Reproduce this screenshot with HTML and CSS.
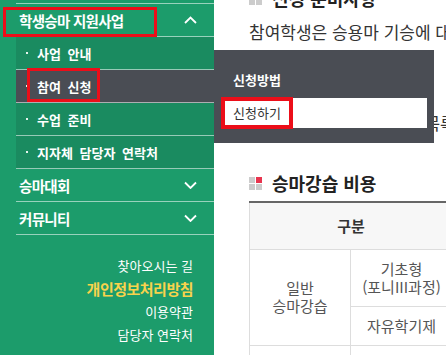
FILE: index.html
```html
<!DOCTYPE html>
<html lang="ko">
<head>
    <meta charset="UTF-8">
    <title>학생승마 지원사업 - 참여 신청</title>
    <link rel="stylesheet" href="styles.css">
</head>
<body>
<div class="wrap">
    <aside class="side">
        <ul class="gnb">
            <li class="menu open">
                <a class="menu-tit" href="#">학생승마 지원사업
                    <svg class="arr" width="13" height="8" viewBox="0 0 13 8"><polyline points="1,7 6.5,1.5 12,7" fill="none" stroke="#fff" stroke-width="1.8"/></svg>
                </a>
                <span class="mark mark-tit"></span>
                <ul class="sub">
                    <li><a href="#">사업 안내</a></li>
                    <li class="on">
                        <a href="#">참여 신청</a>
                        <span class="mark mark-sub"></span>
                        <div class="pop">
                            <strong>신청방법</strong>
                            <div class="pop-box">
                                <a href="#">신청하기</a>
                                <span class="mark mark-pop"></span>
                            </div>
                        </div>
                    </li>
                    <li><a href="#">수업 준비</a></li>
                    <li><a href="#">지자체 담당자 연락처</a></li>
                </ul>
            </li>
            <li class="menu">
                <a class="menu-tit" href="#">승마대회
                    <svg class="arr" width="13" height="8" viewBox="0 0 13 8"><polyline points="1,1.5 6.5,7 12,1.5" fill="none" stroke="#fff" stroke-width="1.8"/></svg>
                </a>
            </li>
            <li class="menu">
                <a class="menu-tit" href="#">커뮤니티
                    <svg class="arr" width="13" height="8" viewBox="0 0 13 8"><polyline points="1,1.5 6.5,7 12,1.5" fill="none" stroke="#fff" stroke-width="1.8"/></svg>
                </a>
            </li>
        </ul>
        <div class="side-links">
            <a href="#">찾아오시는 길</a>
            <a href="#" class="privacy">개인정보처리방침</a>
            <a href="#">이용약관</a>
            <a href="#">담당자 연락처</a>
        </div>
    </aside>

    <main class="content">
        <h3 class="tit tit-cut"><i class="ico"><b></b><b class="red"></b><b></b><b></b></i>신청 준비사항</h3>
        <p class="txt">참여학생은 승용마 기승에 대한 기본 교육을 이수해야 합니다.</p>
        <p class="txt txt2">참여 학생 명단은 신청서 목록에서 확인할 수 있습니다.</p>

        <h3 class="tit tit2"><i class="ico"><b></b><b class="red"></b><b></b><b></b></i>승마강습 비용</h3>
        <table class="tbl">
            <colgroup>
                <col style="width: 101px">
                <col style="width: 102px">
                <col style="width: 200px">
            </colgroup>
            <thead>
            <tr>
                <th colspan="2">구분</th>
                <th>비용</th>
            </tr>
            </thead>
            <tbody>
            <tr>
                <td rowspan="2">일반<br>승마강습</td>
                <td>기초형<br>(포니III과정)</td>
                <td>무료</td>
            </tr>
            <tr>
                <td>자유학기제</td>
                <td>무료</td>
            </tr>
            <tr>
                <td>&nbsp;</td>
                <td>&nbsp;</td>
                <td>&nbsp;</td>
            </tr>
            </tbody>
        </table>
    </main>
</div>
</body>
</html>
```

FILE: styles.css
```css
* {
    margin: 0;
    padding: 0;
    box-sizing: border-box;
}

html, body {
    width: 446px;
    height: 355px;
    overflow: hidden;
    background: #fff;
}

body {
    font-family: "Noto Sans CJK KR", "Noto Sans", sans-serif;
    color: #333;
}

a {
    color: inherit;
    text-decoration: none;
}

ul {
    list-style: none;
}

.wrap {
    display: flex;
    height: 355px;
}

/* 왼쪽 메뉴 */
.side {
    width: 214px;
    flex-shrink: 0;
    background: #1c9c6b;
    color: #fff;
    position: relative;
    z-index: 2;
}

.gnb {
    margin: 3px 0 0 16px;
    border-top: 1px solid rgba(255, 255, 255, .55);
}

.menu {
    position: relative;
}

.menu-tit {
    display: flex;
    justify-content: space-between;
    align-items: center;
    height: 33px;
    padding: 0 17px 0 3px;
    border-bottom: 1px solid rgba(255, 255, 255, .55);
    font-size: 14.5px;
    font-weight: bold;
    letter-spacing: -0.7px;
}

.sub {
    background: #1a8b60;
}

.sub > li {
    position: relative;
}

.sub > li > a {
    display: flex;
    align-items: center;
    height: 33px;
    padding-left: 10px;
    border-bottom: 1px solid rgba(255, 255, 255, .55);
    font-size: 13px;
    font-weight: bold;
    word-spacing: 3px;
}

.sub > li > a:before {
    content: "";
    width: 2px;
    height: 2px;
    background: #e6f4ee;
    margin-right: 9px;
}

.sub > li.on > a {
    background: #4a4d54;
}

/* 빨간 표시 상자 */
.mark {
    position: absolute;
    border: 3px solid #ec0e19;
    pointer-events: none;
}

.mark-tit {
    left: -13px;
    top: 3px;
    width: 154px;
    height: 30px;
}

.mark-sub {
    left: 11px;
    top: -2px;
    width: 73px;
    height: 34px;
    border-width: 3.5px;
}

.mark-pop {
    left: -1px;
    top: -1px;
    width: 72px;
    height: 32px;
    border-width: 4px;
}

/* 신청방법 팝업 */
.pop {
    position: absolute;
    left: 100%;
    top: -20px;
    width: 220px;
    padding: 20px 7px 15px 8px;
    background: #4a4d54;
}

.pop strong {
    display: block;
    line-height: 20px;
    padding-left: 11px;
    font-size: 13px;
}

.pop-box {
    position: relative;
    margin-top: 8px;
    height: 30px;
    background: #fff;
}

.pop-box a {
    display: block;
    line-height: 30px;
    padding-left: 11px;
    font-size: 13px;
    color: #333;
}

.side-links {
    display: flex;
    flex-direction: column;
    align-items: flex-end;
    margin-top: 19px;
    padding-right: 21px;
    font-size: 13px;
    line-height: 23px;
}

.side-links .privacy {
    color: #f8d34c;
    font-weight: bold;
    font-size: 15px;
    letter-spacing: -0.5px;
}

/* 본문 */
.content {
    flex: 1;
    min-width: 0;
    padding-left: 35px;
    white-space: nowrap;
}

.tit {
    display: flex;
    align-items: center;
    height: 26px;
    font-size: 18px;
    color: #222;
}

.tit-cut {
    margin-top: -15px;
}

.ico {
    display: grid;
    grid-template-columns: 6px 6px;
    gap: 1px;
    margin-right: 10px;
}

.ico b {
    width: 6px;
    height: 6px;
    background: #ccc;
}

.ico b.red {
    background: #e8344e;
}

.txt {
    margin-top: 8px;
    font-size: 17px;
    line-height: 26px;
    color: #333;
}

.txt2 {
    margin-top: 65px;
}

.tit2 {
    margin-top: 34px;
}

.tbl {
    margin-top: 5px;
    width: 403px;
    table-layout: fixed;
    border-collapse: collapse;
    border-top: 2px solid #666;
    font-size: 15px;
    color: #555;
}

.tbl th, .tbl td {
    border: 1px solid #ddd;
    text-align: center;
    line-height: 18px;
    padding: 10px 0;
}

.tbl th {
    background: #f7f7f7;
    color: #333;
    height: 47px;
    border-top: 0;
}
```
